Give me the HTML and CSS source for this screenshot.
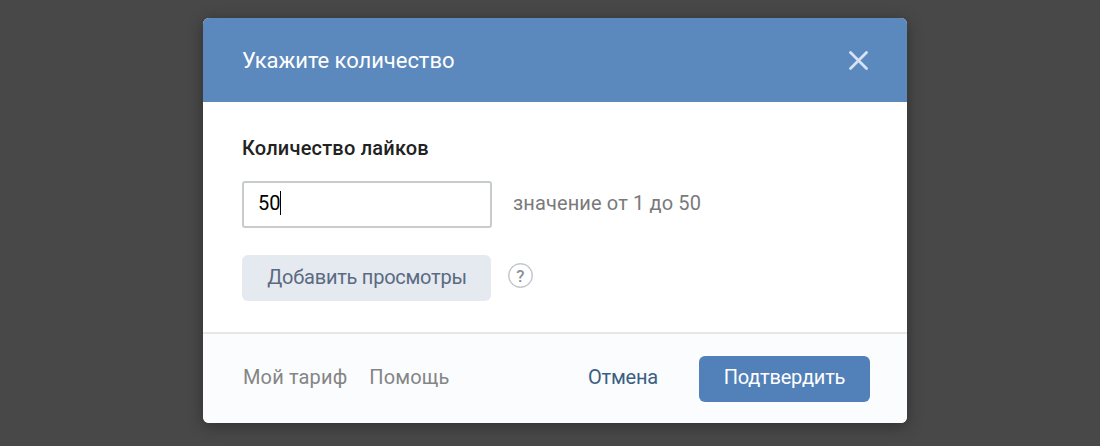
FILE: index.html
```html
<!DOCTYPE html>
<html lang="ru">
  <head>
    <meta charset="UTF-8" />
    <meta name="viewport" content="width=device-width, initial-scale=1.0" />
    <title>Укажите количество</title>
    <link rel="stylesheet" href="styles.css" />
  </head>
  <body>
    <div class="modal">
      <header class="modal-header">
        <h2>Укажите количество</h2>
        <button class="close" aria-label="Закрыть">
          <svg width="20" height="20" viewBox="0 0 20 20">
            <path d="M2.5 2.5L18.5 18.5M18.5 2.5L2.5 18.5" />
          </svg>
        </button>
      </header>

      <div class="modal-body">
        <h3>Количество лайков</h3>
        <div class="row">
          <div class="field"><span class="value">50</span></div>
          <span class="hint">значение от 1 до 50</span>
        </div>
        <div class="row">
          <button class="btn btn-light">Добавить просмотры</button>
          <span class="help">?</span>
        </div>
      </div>

      <footer class="modal-footer">
        <a class="link">Мой тариф</a>
        <a class="link">Помощь</a>
        <button class="cancel">Отмена</button>
        <button class="btn btn-primary">Подтвердить</button>
      </footer>
    </div>
  </body>
</html>
```
FILE: styles.css
```css
* {
  box-sizing: border-box;
}

body {
  margin: 0;
  height: 446px;
  padding: 18px 0 0 203px;
  background: #484848;
  font-family: Roboto, sans-serif;
  font-size: 20px;
  overflow: hidden;
}

h2,
h3 {
  margin: 0;
  font-weight: 500;
}

button {
  padding: 0;
  border: none;
  background: none;
  font: inherit;
  cursor: pointer;
}

.modal {
  width: 704px;
  height: 405px;
  display: flex;
  flex-direction: column;
  background: #fff;
  border-radius: 6px;
  overflow: hidden;
  box-shadow: 0 3px 16px rgba(0, 0, 0, 0.35);
}

.modal-header {
  height: 84px;
  padding: 0 39px;
  display: flex;
  align-items: center;
  justify-content: space-between;
  background: #5b88bd;
  color: #fff;
}

.modal-header h2 {
  font-size: 22px;
  font-weight: 400;
  letter-spacing: -0.05px;
}

.close {
  display: flex;
}

.close svg {
  fill: none;
  stroke: #d5e3f5;
  stroke-width: 2.8;
  stroke-linecap: round;
}

.modal-body {
  flex: 1;
  padding: 34px 39px 0;
}

.modal-body h3 {
  height: 45px;
  font-size: 20px;
  line-height: 24px;
  letter-spacing: 0.2px;
  color: #222;
}

.row {
  display: flex;
  align-items: center;
}

.field {
  width: 250px;
  height: 47px;
  padding: 0 0 3px 14px;
  display: flex;
  align-items: center;
  border: 2px solid #c8cccd;
  border-radius: 3px;
}

.value {
  line-height: 24px;
  border-right: 1px solid #000;
}

.hint {
  margin-left: 21px;
  padding-bottom: 3px;
  letter-spacing: 0.13px;
  color: #7a7a7a;
}

.row + .row {
  margin-top: 27px;
}

.btn {
  height: 46px;
  padding-bottom: 2px;
  border-radius: 6px;
}

.btn-light {
  width: 249px;
  padding-left: 1px;
  background: #e5e9f0;
  color: #5b6a80;
  letter-spacing: -0.25px;
}

.help {
  width: 25px;
  height: 25px;
  margin: -5px 0 0 17px;
  border: 1.5px solid #b8bdc4;
  border-radius: 50%;
  box-shadow: inset 0 0 0 0.5px #c4c8ce;
  color: #8a9099;
  font-size: 17px;
  font-weight: 500;
  line-height: 24px;
  text-align: center;
}

.modal-footer {
  height: 91px;
  padding: 0 37px 0 40px;
  display: flex;
  align-items: center;
  border-top: 2px solid #e4e6e8;
  background: #fafcfe;
}

.link {
  margin-right: 22px;
  padding-bottom: 3px;
  letter-spacing: 0.15px;
  color: #858585;
}

.cancel {
  margin: 0 41px 0 auto;
  padding-bottom: 3px;
  letter-spacing: -0.2px;
  color: #3b5f82;
}

.btn-primary {
  width: 171px;
  padding-bottom: 3px;
  background: #5181b8;
  color: #fff;
  letter-spacing: -0.2px;
}
```
